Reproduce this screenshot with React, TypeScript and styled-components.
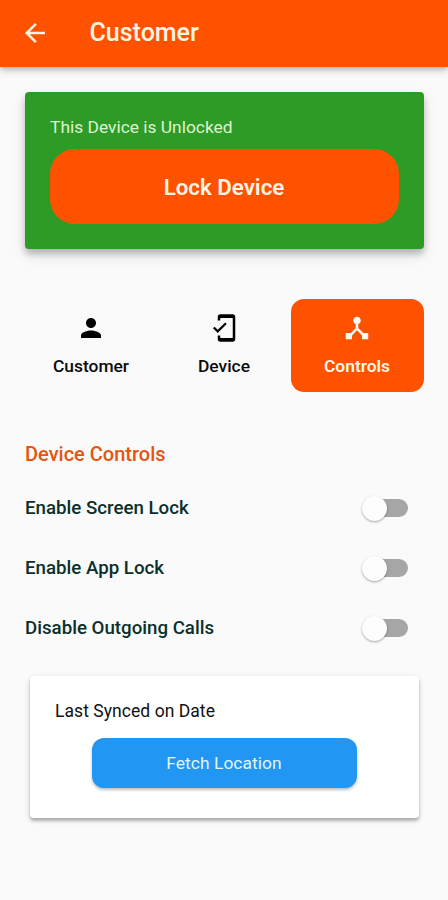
import React, { useState } from "react";
import styled, { createGlobalStyle } from "styled-components";
import {
  MdArrowBack,
  MdDeviceHub,
  MdMobileFriendly,
  MdPerson,
} from "react-icons/md";

const GlobalStyle = createGlobalStyle`
  * { box-sizing: border-box; }
  body {
    margin: 0;
    background: #fafafa;
    font-family: Roboto, "Liberation Sans", sans-serif;
  }
  button { font-family: inherit; border: 0; padding: 0; cursor: pointer; }
`;

const Screen = styled.div`
  display: flex;
  flex-direction: column;
  height: 900px;
  overflow: hidden;
  background: #fafafa;
`;

const AppBar = styled.header`
  display: flex;
  align-items: center;
  flex: none;
  height: 67px;
  padding: 0 20px 2px;
  gap: 39.5px;
  background: #ff5200;
  color: #fff3e2;
  box-shadow: 0 2px 5px rgba(0, 0, 0, 0.22), 0 5px 8px rgba(0, 0, 0, 0.1);
`;

const BackButton = styled.button`
  display: flex;
  background: none;
  color: inherit;
`;

const Title = styled.h1`
  margin: 0;
  font-size: 25px;
  line-height: 30px;
  font-weight: 500;
`;

const Content = styled.main`
  display: flex;
  flex-direction: column;
  padding: 25px 24px 0 25px;
`;

const StatusCard = styled.section`
  display: flex;
  flex-direction: column;
  height: 157px;
  padding: 25px 25px 0;
  border-radius: 4px;
  background: #2e9b27;
  box-shadow: 0 5px 6px rgba(0, 0, 0, 0.2), 0 6px 14px rgba(0, 0, 0, 0.12);
`;

const StatusText = styled.p`
  margin: 0 0 12px;
  color: #dcf5cf;
  font-size: 17.4px;
  line-height: 20px;
`;

const LockButton = styled.button`
  height: 75px;
  padding-right: 1px;
  border-radius: 25px;
  background: #ff5200;
  color: #fff3e2;
  font-size: 22.3px;
  font-weight: 600;
`;

const Tabs = styled.nav`
  display: grid;
  grid-template-columns: repeat(3, 133px);
  margin-top: 50px;
`;

const Tab = styled.button<{ $active: boolean }>`
  display: flex;
  flex-direction: column;
  align-items: center;
  height: 93px;
  padding: 14px 1px 0 0;
  gap: 12px;
  border-radius: 13px;
  background: ${({ $active }) => ($active ? "#ff5200" : "transparent")};
  color: ${({ $active }) => ($active ? "#fff3e2" : "#0b0b0b")};
  font-size: 17.4px;
  line-height: 22px;
  font-weight: ${({ $active }) => ($active ? 600 : 500)};

  svg {
    color: ${({ $active }) => ($active ? "#fffaf4" : "#000")};
  }
`;

const SectionTitle = styled.h2`
  margin: 50px 0 12px;
  color: #e4560f;
  font-size: 20px;
  line-height: 24px;
  font-weight: 500;
`;

const SettingRow = styled.div`
  display: flex;
  align-items: center;
  justify-content: space-between;
  height: 60px;
  padding-right: 16px;
`;

const SettingLabel = styled.span`
  color: #0c2f2b;
  font-size: 18.7px;
  line-height: 24px;
  font-weight: 500;
`;

const Switch = styled.button<{ $on: boolean }>`
  display: flex;
  align-items: center;
  justify-content: ${({ $on }) => ($on ? "flex-end" : "flex-start")};
  width: 41px;
  height: 18px;
  border-radius: 9px;
  background: ${({ $on }) => ($on ? "#ffa880" : "#a6a6a6")};
`;

const Thumb = styled.span<{ $on: boolean }>`
  flex: none;
  width: 25px;
  height: 25px;
  margin: 0 ${({ $on }) => ($on ? "-5px" : "0")} 0 ${({ $on }) => ($on ? "0" : "-5px")};
  border-radius: 50%;
  background: ${({ $on }) => ($on ? "#ff5200" : "#fdfdfd")};
  box-shadow: 0 1px 2px rgba(0, 0, 0, 0.24), 0 1px 3px rgba(0, 0, 0, 0.12);
`;

const SyncCard = styled.section`
  display: flex;
  flex-direction: column;
  height: 142px;
  margin: 18px 5px 0;
  padding: 25px 25px 0;
  border-radius: 4px;
  background: #fff;
  box-shadow: 0 3px 3px rgba(0, 0, 0, 0.22), 0 2px 6px rgba(0, 0, 0, 0.14);
`;

const SyncText = styled.p`
  margin: 0 0 17px;
  color: #111;
  font-size: 17.5px;
  line-height: 20px;
  font-weight: 450;
  letter-spacing: 0.05px;
`;

const FetchButton = styled.button`
  align-self: center;
  width: 265px;
  height: 50px;
  padding-right: 1px;
  border-radius: 12px;
  background: #2196f3;
  color: #e3f5ff;
  font-size: 17.4px;
  font-weight: 450;
  letter-spacing: 0.05px;
  box-shadow: 0 2px 3px rgba(0, 0, 0, 0.26);
`;

const tabs = [
  { name: "Customer", Icon: MdPerson },
  { name: "Device", Icon: MdMobileFriendly },
  { name: "Controls", Icon: MdDeviceHub },
];

const settings = ["Enable Screen Lock", "Enable App Lock", "Disable Outgoing Calls"];

function Setting({ label }: { label: string }) {
  const [on, setOn] = useState(false);
  return (
    <SettingRow>
      <SettingLabel>{label}</SettingLabel>
      <Switch $on={on} role="switch" aria-checked={on} aria-label={label} onClick={() => setOn(!on)}>
        <Thumb $on={on} />
      </Switch>
    </SettingRow>
  );
}

export default function App() {
  const [active, setActive] = useState("Controls");
  return (
    <>
      <GlobalStyle />
      <Screen>
        <AppBar>
          <BackButton aria-label="Back">
            <MdArrowBack size={30} />
          </BackButton>
          <Title>Customer</Title>
        </AppBar>
        <Content>
          <StatusCard>
            <StatusText>This Device is Unlocked</StatusText>
            <LockButton>Lock Device</LockButton>
          </StatusCard>
          <Tabs>
            {tabs.map(({ name, Icon }) => (
              <Tab key={name} $active={name === active} onClick={() => setActive(name)}>
                <Icon size={30} />
                {name}
              </Tab>
            ))}
          </Tabs>
          <SectionTitle>Device Controls</SectionTitle>
          {settings.map((label) => (
            <Setting key={label} label={label} />
          ))}
          <SyncCard>
            <SyncText>Last Synced on Date</SyncText>
            <FetchButton>Fetch Location</FetchButton>
          </SyncCard>
        </Content>
      </Screen>
    </>
  );
}
